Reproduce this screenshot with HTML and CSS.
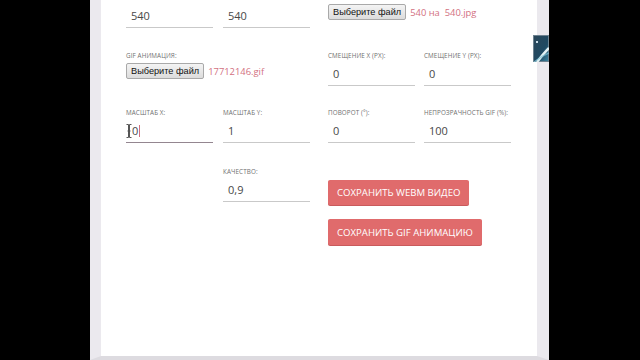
FILE: index.html
```html
<!DOCTYPE html>
<html lang="ru">
<head>
<meta charset="utf-8">
<title>GIF</title>
<link rel="stylesheet" href="styles.css">
</head>
<body>
<div class="screen">
  <div class="side"></div>
  <div class="page">
    <div class="form">
      <div class="row r0">
        <div class="field"><div class="input">540</div></div>
        <div class="field"><div class="input">540</div></div>
        <div class="field wide">
          <div class="file"><span class="file-btn">Выберите файл</span><span class="fname">540 на&nbsp; 540.jpg</span></div>
        </div>
      </div>
      <div class="row r1">
        <div class="field wide"><div class="label">GIF анимация:</div>
          <div class="file"><span class="file-btn">Выберите файл</span><span class="fname">17712146.gif</span></div>
        </div>
        <div class="field"><div class="label">Смещение X (px):</div><div class="input">0</div></div>
        <div class="field"><div class="label">Смещение Y (px):</div><div class="input">0</div></div>
      </div>
      <div class="row r2">
        <div class="field"><div class="label">Масштаб X:</div>
          <div class="input focus"><span class="ibeam"><svg width="6" height="14" viewBox="0 0 6 14"><path d="M0.5 0.5h2v13h-2M5.5 0.5h-2v13h2M1.5 7h3" fill="none" stroke="#555" stroke-width="1"/></svg></span>0<span class="caret"></span></div>
        </div>
        <div class="field"><div class="label">Масштаб Y:</div><div class="input">1</div></div>
        <div class="field"><div class="label">Поворот (°):</div><div class="input">0</div></div>
        <div class="field"><div class="label">Непрозрачность GIF (%):</div><div class="input">100</div></div>
      </div>
      <div class="row r3">
        <div class="empty"></div>
        <div class="field"><div class="label">Качество:</div><div class="input">0,9</div></div>
        <div class="actions">
          <button class="btn">Сохранить WEBM видео</button>
          <button class="btn btn-gif">Сохранить GIF анимацию</button>
        </div>
      </div>
    </div>
  </div>
  <div class="thumb">
    <svg width="16" height="27" viewBox="0 0 16 27">
      <defs>
        <linearGradient id="g" x1="0" y1="0" x2="1" y2="1">
          <stop offset="0" stop-color="#2c4658"/>
          <stop offset="0.6" stop-color="#1f4a63"/>
          <stop offset="1" stop-color="#3f8aa6"/>
        </linearGradient>
      </defs>
      <rect width="16" height="27" fill="url(#g)"/>
      <rect x="0.5" y="0.5" width="15" height="26" fill="none" stroke="#6d8290" stroke-width="1"/>
      <rect x="3" y="6" width="2" height="2" fill="#c9dbe6"/>
      <path d="M4 27 C8 22 12 17 16 13" fill="none" stroke="#e4f3f6" stroke-width="2.5"/>
      <path d="M1 27 C6 23 11 20 16 18" fill="none" stroke="#7fc3d6" stroke-width="1.5" opacity="0.7"/>
    </svg>
  </div>
</div>
</body>
</html>
```

FILE: styles.css
```css
html, body {
  margin: 0;
  padding: 0;
}
body {
  background: #000;
  width: 640px;
  height: 360px;
  overflow: hidden;
  font-family: "Open Sans", "Noto Sans", sans-serif;
}
.screen {
  position: relative;
  display: flex;
  height: 360px;
}
.side {
  width: 90px;
  flex: none;
}
.page {
  flex: none;
  width: 436px;
  height: 356px;
  background: #fff;
  border-left: 11px solid #ebe9ee;
  border-right: 12px solid #ebe9ee;
  border-bottom: 4px solid #dddbe0;
  overflow: hidden;
}
.form {
  padding-left: 25px;
  padding-top: 3px;
}
.row {
  display: grid;
  grid-template-columns: 97px 105px 96px 87px;
}
.r0 .file { margin-top: 1px; }
.r1 { margin-top: 23px; }
.r2 { margin-top: 22px; }
.r3 { margin-top: 24px; }
.field {
  width: 87px;
}
.field.wide {
  grid-column: span 2;
  width: auto;
}
.label {
  height: 10px;
  line-height: 10px;
  font-size: 6.3px;
  text-transform: uppercase;
  color: #707070;
  white-space: nowrap;
  letter-spacing: 0.1px;
}
.input {
  position: relative;
  margin-top: 2px;
  height: 22px;
  line-height: 22px;
  border-bottom: 1px solid #c9c9c9;
  padding-left: 5px;
  font-size: 11px;
  color: #484848;
}
.input.focus {
  border-bottom: 1px solid #948690;
  padding-left: 6px;
}
.caret {
  display: inline-block;
  width: 1px;
  height: 12px;
  background: #d46f7f;
  vertical-align: -2px;
  margin-left: 1px;
}
.ibeam {
  position: absolute;
  left: 0;
  top: 4px;
  line-height: 0;
}
.file {
  margin-top: 2px;
  display: flex;
  align-items: center;
  height: 16px;
}
.file-btn {
  display: inline-flex;
  align-items: center;
  height: 14px;
  padding: 0 4px;
  border: 1px solid #a9a9a9;
  border-radius: 2px;
  background: linear-gradient(#f4f4f4, #dcdcdc);
  font-family: "Liberation Sans", Arial, sans-serif;
  font-size: 9.2px;
  color: #111;
  white-space: nowrap;
}
.fname {
  margin-left: 4px;
  font-size: 9.4px;
  color: #d2707f;
  white-space: nowrap;
}
.actions {
  grid-column: span 2;
  padding-top: 13px;
  display: flex;
  flex-direction: column;
  align-items: flex-start;
  gap: 14px;
}
.btn {
  height: 25px;
  padding: 0 9px;
  border: none;
  border-radius: 2px;
  background: #e06b6c;
  color: #fff;
  font-family: "Open Sans", sans-serif;
  font-weight: 500;
  font-size: 9.6px;
  text-transform: uppercase;
  white-space: nowrap;
  box-shadow: 0 1px 0 #c95a5c;
}
.btn-gif {
  height: 26px;
}
.thumb {
  position: absolute;
  left: 533px;
  top: 35px;
  width: 16px;
  height: 27px;
  line-height: 0;
}
```
